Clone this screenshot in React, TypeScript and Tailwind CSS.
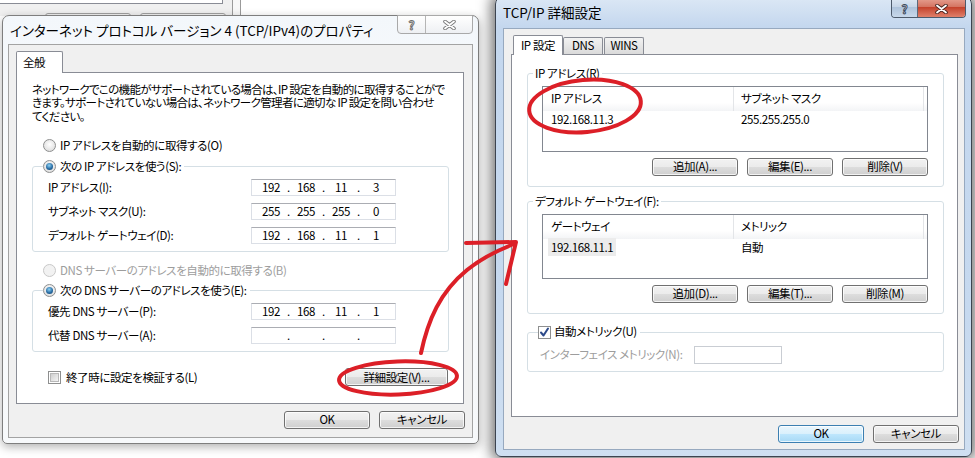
import React from 'react';

type Octets = [string, string, string, string];

const IpBox = ({ parts }: { parts: Octets }) => (
  <div className="flex h-[17px] w-[145px] items-center border border-[#dbdfe6] border-t-[#abadb3] bg-white pl-[5px] leading-none">
    {parts.map((p, i) => (
      <React.Fragment key={i}>
        <span className="w-[28px] text-center">{p}</span>
        {i < 3 && <span className="w-[7px] text-center">.</span>}
      </React.Fragment>
    ))}
  </div>
);

const Radio = ({ checked, disabled }: { checked?: boolean; disabled?: boolean }) => (
  <span
    className={`flex h-[13px] w-[13px] shrink-0 items-center justify-center rounded-full border ${
      disabled
        ? 'border-[#c8c8c8] bg-[#f2f2f2]'
        : 'border-[#8e8f8f] bg-[radial-gradient(circle_at_50%_40%,#ffffff,#d6d6d6)]'
    }`}
  >
    {checked && (
      <span className="h-[7px] w-[7px] rounded-full bg-[radial-gradient(circle_at_45%_35%,#8fd3f5,#2a6ea5_55%,#0d3b66)]" />
    )}
  </span>
);

const Checkbox = ({ checked }: { checked?: boolean }) => (
  <span className="flex h-[13px] w-[13px] shrink-0 items-center justify-center border border-[#8e8f8f] bg-white">
    {checked ? (
      <svg width="11" height="11" viewBox="0 0 11 11">
        <path d="M2 5.5 L4.5 8.5 L9 1.5" fill="none" stroke="#2d4a8a" strokeWidth="2" strokeLinecap="round" strokeLinejoin="round" />
      </svg>
    ) : (
      <span className="h-[9px] w-[9px] border border-[#b8b8b8] bg-[linear-gradient(135deg,#cfcfcf,#f4f4f4)]" />
    )}
  </span>
);

const Button = ({ label, wide, primary }: { label: string; wide?: boolean; primary?: boolean }) => (
  <div
    className={`flex h-[18px] shrink-0 items-center justify-center rounded-[3px] border leading-none shadow-[inset_0_0_0_1px_rgba(255,255,255,0.75)] ${
      wide ? 'w-[103px]' : 'w-[86px]'
    } ${
      primary
        ? 'border-[#3c7fb1] bg-[linear-gradient(to_bottom,#eaf6fd_0%,#d9f0fc_50%,#bee6fd_51%,#a7d9f5_100%)]'
        : 'border-[#707070] bg-[linear-gradient(to_bottom,#f2f2f2_0%,#ebebeb_50%,#dddddd_51%,#cfcfcf_100%)]'
    }`}
  >
    {label}
  </div>
);

const XGlyph = ({ dark, light }: { dark: string; light: string }) => (
  <svg width="13" height="10" viewBox="0 0 13 10">
    <path d="M2 1.5 L11 8.5 M11 1.5 L2 8.5" stroke={dark} strokeWidth="3.6" strokeLinecap="round" />
    <path d="M2 1.5 L11 8.5 M11 1.5 L2 8.5" stroke={light} strokeWidth="1.8" strokeLinecap="round" />
  </svg>
);

const ListView = ({
  cols,
  row,
  selected,
  height,
}: {
  cols: [string, string];
  row: [string, string];
  selected?: boolean;
  height: string;
}) => (
  <div className={`ml-[14px] flex w-[386px] flex-col border border-[#828790] bg-white ${height}`}>
    <div className="flex h-[24px] shrink-0 bg-[linear-gradient(to_bottom,#ffffff_65%,#f3f4f6)]">
      <div className="flex w-[191px] items-center border-r border-[#e3e5e8] pl-[8px]">{cols[0]}</div>
      <div className="flex w-[190px] items-center border-r border-[#e3e5e8] pl-[7px]">{cols[1]}</div>
    </div>
    <div className="flex h-[17px] items-center">
      <div className="w-[191px]">
        {selected ? (
          <span className="ml-[5px] bg-[#ececec] px-[3px] py-[1px]">{row[0]}</span>
        ) : (
          <span className="pl-[8px]">{row[0]}</span>
        )}
      </div>
      <div className="pl-[7px]">{row[1]}</div>
    </div>
  </div>
);

export default function App() {
  return (
    <div className="relative h-[458px] w-[975px] overflow-hidden bg-white text-[11.5px] tracking-[-0.4px] text-black font-['Noto_Sans_CJK_JP',sans-serif] [font-feature-settings:'palt']">
      {/* window behind, top-left */}
      <div className="absolute left-0 top-0 flex h-[16px] w-[241px]">
        <div className="relative h-full w-[232px] bg-[#f0f0f0]">
          <div className="h-[4px] w-[223px] border-b border-r border-[#898c95] bg-white" />
          <div className="ml-[45px] mt-[9px] flex gap-[9px]">
            <div className="h-[6px] w-[86px] rounded-t-[3px] border border-[#a0a0a0] bg-[#f2f2f2]" />
            <div className="h-[6px] w-[86px] rounded-t-[3px] border border-[#a0a0a0] bg-[#f2f2f2]" />
          </div>
        </div>
        <div className="h-full w-[9px] border-x border-[#9a9a9a] bg-[#f7f7f7]" />
      </div>

      {/* left dialog: IPv4 properties */}
      <div className="absolute left-[2px] top-[15px] flex h-[429px] w-[477px] flex-col rounded-t-[7px] rounded-b-[5px] border border-[#7e7e7e] bg-[linear-gradient(to_bottom,#f3f7fb,#fbfcfd_40%,#f7f9fb)] px-[5px] pb-[5px] shadow-[0_3px_10px_rgba(0,0,0,0.3)]">
        <div className="flex h-[28px] shrink-0">
          <span className="whitespace-nowrap pl-[2px] text-[13.5px] leading-[29px] tracking-normal">
            インターネット プロトコル バージョン 4 (TCP/IPv4)のプロパティ
          </span>
          <div className="-mt-px ml-auto flex h-[19px] self-start overflow-hidden rounded-b-[4px] border border-[#a9a9a9] bg-[linear-gradient(to_bottom,#ffffff,#eef0f3)]">
            <div className="flex w-[28px] items-center justify-center border-r border-[#b5b5b5] text-[12px] font-bold leading-[16px] tracking-normal text-white [-webkit-text-stroke:1px_#707070]">
              ?
            </div>
            <div className="flex w-[46px] items-center justify-center">
              <XGlyph dark="#7a7a7a" light="#ffffff" />
            </div>
          </div>
        </div>

        <div className="flex flex-1 flex-col border border-[#a3a3a3] bg-[#f0f0f0] pt-[6px]">
          <div className="flex pl-[7px]">
            <div className="relative z-10 -mb-px flex h-[22px] w-[47px] items-center rounded-t-[2px] border border-b-0 border-[#898c95] bg-white pl-[6px]">
              全般
            </div>
          </div>
          <div className="ml-[7px] flex h-[332px] w-[448px] flex-col border border-[#898c95] bg-white pt-[10px]">
            <p className="ml-[15px] whitespace-nowrap leading-[13.3px] tracking-[-0.65px]">
              ネットワークでこの機能がサポートされている場合は、IP 設定を自動的に取得することがで
              <br />
              きます。サポートされていない場合は、ネットワーク管理者に適切な IP 設定を問い合わせ
              <br />
              てください。
            </p>

            <div className="ml-[26px] mt-[16px] flex h-[14px] items-center gap-[4px]">
              <Radio />
              <span>IP アドレスを自動的に取得する(O)</span>
            </div>

            <fieldset className="ml-[15px] mt-[7px] w-[417px] rounded-[3px] border border-[#d5dfe5] pb-[7px]">
              <legend className="ml-[10px] pr-[3px]">
                <span className="flex h-[14px] items-center gap-[4px]">
                  <Radio checked />
                  <span>次の IP アドレスを使う(S):</span>
                </span>
              </legend>
              <div className="mt-[5px] flex flex-col gap-[7px] pl-[15px]">
                <div className="flex h-[17px] items-center">
                  <span className="w-[203px]">IP アドレス(I):</span>
                  <IpBox parts={['192', '168', '11', '3']} />
                </div>
                <div className="flex h-[17px] items-center">
                  <span className="w-[203px]">サブネット マスク(U):</span>
                  <IpBox parts={['255', '255', '255', '0']} />
                </div>
                <div className="flex h-[17px] items-center">
                  <span className="w-[203px]">デフォルト ゲートウェイ(D):</span>
                  <IpBox parts={['192', '168', '11', '1']} />
                </div>
              </div>
            </fieldset>

            <div className="ml-[26px] mt-[12px] flex h-[14px] items-center gap-[4px] text-[#9d9d9d]">
              <Radio disabled />
              <span>DNS サーバーのアドレスを自動的に取得する(B)</span>
            </div>

            <fieldset className="ml-[15px] mt-[6px] w-[417px] rounded-[3px] border border-[#d5dfe5] pb-[7px]">
              <legend className="ml-[10px] pr-[3px]">
                <span className="flex h-[14px] items-center gap-[4px]">
                  <Radio checked />
                  <span>次の DNS サーバーのアドレスを使う(E):</span>
                </span>
              </legend>
              <div className="mt-[5px] flex flex-col gap-[7px] pl-[15px]">
                <div className="flex h-[17px] items-center">
                  <span className="w-[203px]">優先 DNS サーバー(P):</span>
                  <IpBox parts={['192', '168', '11', '1']} />
                </div>
                <div className="flex h-[17px] items-center">
                  <span className="w-[203px]">代替 DNS サーバー(A):</span>
                  <IpBox parts={['', '', '', '']} />
                </div>
              </div>
            </fieldset>

            <div className="mt-[16px] flex h-[19px] items-center pl-[31px] pr-[15px]">
              <Checkbox />
              <span className="ml-[5px]">終了時に設定を検証する(L)</span>
              <div className="ml-auto">
                <Button label="詳細設定(V)..." wide />
              </div>
            </div>
          </div>

          <div className="mt-[7px] flex justify-end gap-[9px] pr-[7px]">
            <Button label="OK" />
            <Button label="キャンセル" />
          </div>
        </div>
      </div>

      {/* right dialog: TCP/IP advanced */}
      <div className="absolute left-[495px] top-[-4px] flex h-[461px] w-[477px] flex-col rounded-t-[8px] rounded-b-[6px] border border-[#3c4450] bg-[linear-gradient(to_bottom,#dce8f5,#c4d7ee_30px,#c6d9ef_70%,#cfdff1)] pb-[6px] pl-[7px] pr-[6px] shadow-[0_0_14px_4px_rgba(0,0,0,0.55)]">
        <div className="flex h-[31px] shrink-0">
          <span className="whitespace-nowrap text-[13.5px] leading-[31px] tracking-normal">TCP/IP 詳細設定</span>
          <div className="ml-auto -mr-px flex h-[21px] self-start overflow-hidden rounded-b-[4px] border border-t-0 border-[#4d5a6b]">
            <div className="flex w-[26px] items-center justify-center border-r border-[#5c6a7c] bg-[linear-gradient(to_bottom,#e3ecf6,#c6d5e7_50%,#aec3db_51%,#c8d8ea)] pt-[3px] text-[12px] font-bold leading-[16px] tracking-normal text-white [-webkit-text-stroke:1px_#3d4c5f]">
              ?
            </div>
            <div className="flex w-[47px] items-center justify-center bg-[linear-gradient(to_bottom,#e9a899,#d47361_50%,#c4412b_51%,#e0806a)] pt-[3px]">
              <XGlyph dark="#4a2520" light="#ffffff" />
            </div>
          </div>
        </div>

        <div className="flex flex-1 flex-col border border-[#97a9bf] bg-[#f0f0f0] pt-[6px]">
          <div className="flex items-end pl-[9px]">
            <div className="relative z-10 -mb-px flex h-[20px] w-[50px] items-center justify-center rounded-t-[2px] border border-b-0 border-[#898c95] bg-white">
              IP 設定
            </div>
            <div className="flex h-[17px] w-[40px] items-center justify-center rounded-t-[2px] border border-b-0 border-[#898c95] bg-[linear-gradient(to_bottom,#f2f2f2,#dadada)]">
              DNS
            </div>
            <div className="ml-px flex h-[17px] w-[40px] items-center justify-center rounded-t-[2px] border border-b-0 border-[#898c95] bg-[linear-gradient(to_bottom,#f2f2f2,#dadada)]">
              WINS
            </div>
          </div>
          <div className="ml-[7px] flex h-[363px] w-[447px] flex-col border border-[#898c95] bg-white pt-[11px]">
            <fieldset className="ml-[15px] w-[417px] rounded-[3px] border border-[#d5dfe5] pb-[10px]">
              <legend className="ml-[5px] px-[2px] leading-[14px]">IP アドレス(R)</legend>
              <div className="mt-[6px]">
                <ListView cols={['IP アドレス', 'サブネット マスク']} row={['192.168.11.3', '255.255.255.0']} height="h-[66px]" />
              </div>
              <div className="ml-[14px] mt-[6px] flex w-[386px] justify-end gap-[9px]">
                <Button label="追加(A)..." />
                <Button label="編集(E)..." />
                <Button label="削除(V)" />
              </div>
            </fieldset>

            <fieldset className="ml-[15px] mt-[7px] w-[417px] rounded-[3px] border border-[#d5dfe5] pb-[10px]">
              <legend className="ml-[5px] px-[2px] leading-[14px]">デフォルト ゲートウェイ(F):</legend>
              <div className="mt-[6px]">
                <ListView cols={['ゲートウェイ', 'メトリック']} row={['192.168.11.1', '自動']} selected height="h-[65px]" />
              </div>
              <div className="ml-[14px] mt-[6px] flex w-[386px] justify-end gap-[9px]">
                <Button label="追加(D)..." />
                <Button label="編集(T)..." />
                <Button label="削除(M)" />
              </div>
            </fieldset>

            <fieldset className="ml-[15px] mt-[11px] w-[417px] rounded-[3px] border border-[#d5dfe5] pb-[7px]">
              <legend className="ml-[10px] pr-[3px]">
                <span className="flex h-[14px] items-center gap-[3px]">
                  <Checkbox checked />
                  <span>自動メトリック(U)</span>
                </span>
              </legend>
              <div className="mt-[7px] flex h-[18px] items-center">
                <span className="w-[166px] whitespace-nowrap pl-[12px] text-[#9d9d9d]">インターフェイス メトリック(N):</span>
                <div className="h-[18px] w-[88px] border border-[#c9cdd3] bg-white" />
              </div>
            </fieldset>
          </div>

          <div className="mt-[8px] flex justify-end gap-[9px] pr-[5px]">
            <Button label="OK" primary />
            <Button label="キャンセル" />
          </div>
        </div>
      </div>

      {/* red annotations */}
      <svg className="pointer-events-none absolute left-0 top-0 h-[458px] w-[975px]" viewBox="0 0 975 458">
        <g fill="none" stroke="#dc1f27" strokeWidth="4" strokeLinecap="round" strokeLinejoin="round">
          <ellipse cx="398" cy="378" rx="59" ry="16.5" transform="rotate(-2 398 378)" />
          <ellipse cx="585" cy="106" rx="56" ry="26" transform="rotate(-5 585 106)" />
          <path d="M421 353 C428 320 440 292 467 270 C482 258 498 250 514 244" />
          <path d="M466 243 L516 242 L506 284" />
        </g>
      </svg>
    </div>
  );
}
